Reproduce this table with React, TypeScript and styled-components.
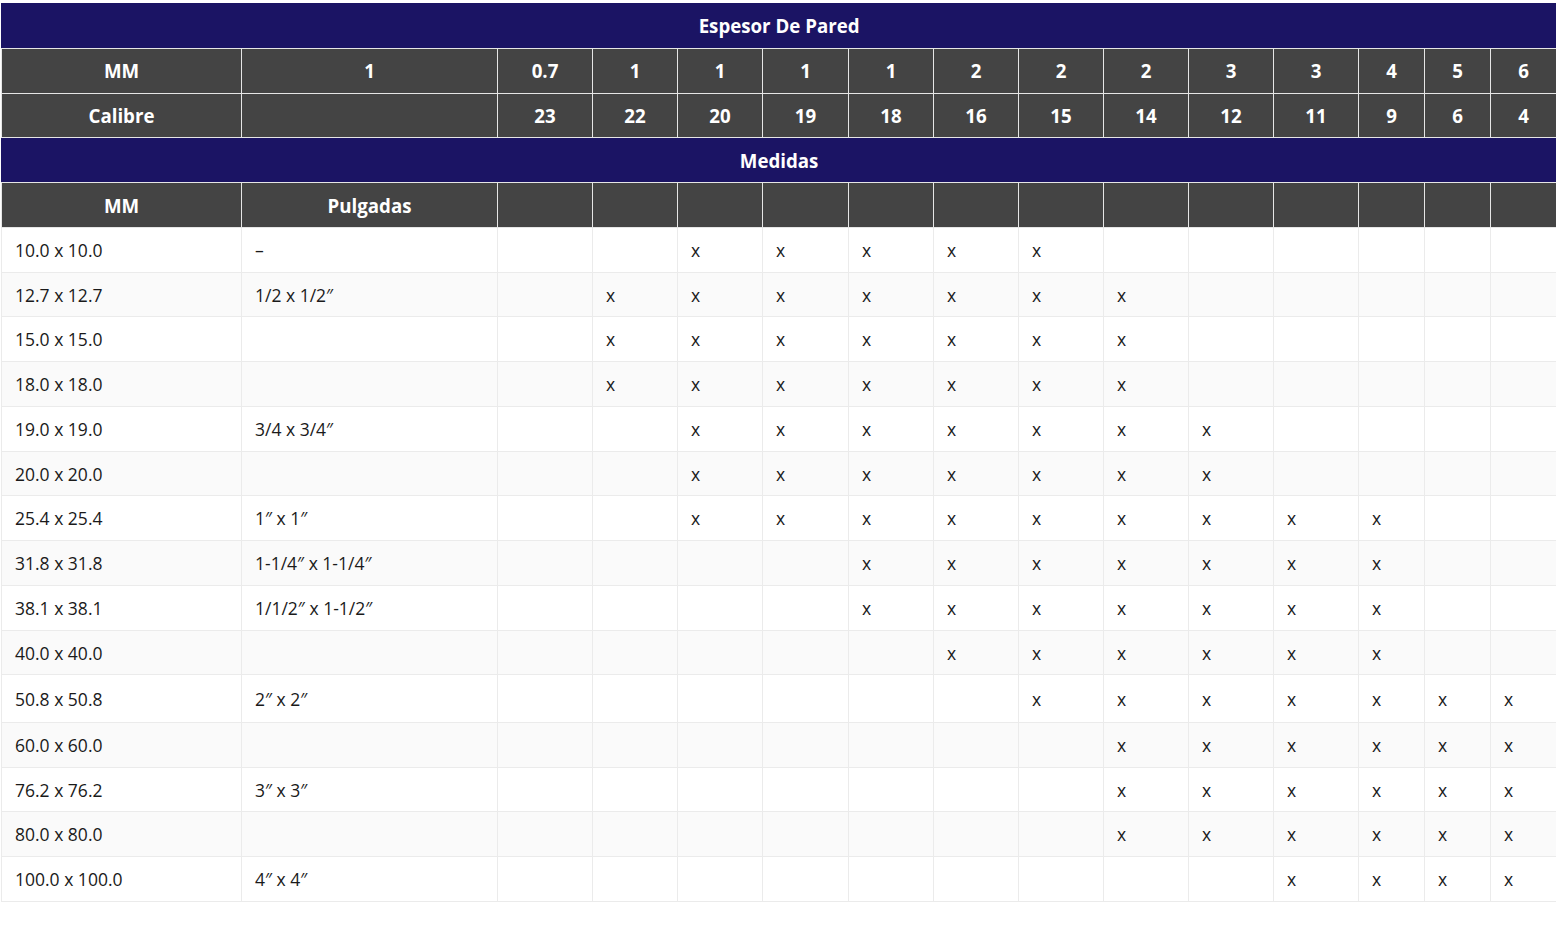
import { type FC } from 'react';
import styled, { createGlobalStyle } from 'styled-components';

const GlobalStyle = createGlobalStyle`
  html, body {
    margin: 0;
    padding: 0;
    background: #ffffff;
  }
  body {
    font-family: 'Open Sans', 'Liberation Sans', sans-serif;
  }
`;

const Page = styled.div`
  padding: 3px 0 0 1px;
`;

const Table = styled.table`
  width: 1555px;
  table-layout: fixed;
  border-collapse: collapse;
  border: 1px solid #e9e9e9;
  font-family: 'Open Sans', 'Liberation Sans', sans-serif;
`;

const BandRow = styled.tr`
  height: 44.8px;
  background: #1b1464;
`;

const BandCell = styled.th`
  color: #ffffff;
  font-size: 18.7px;
  font-weight: 700;
  text-align: center;
  vertical-align: middle;
  padding: 0 13px;
  border: 1px solid #1b1464;
  border-bottom: 1px solid #e6e6e6;
`;

const HeadRow = styled.tr`
  height: 44.8px;
  background: #444444;
`;

const HeadCell = styled.th`
  color: #ffffff;
  font-size: 18.7px;
  font-weight: 700;
  text-align: center;
  vertical-align: middle;
  padding: 0 6px;
  border: 1px solid #e6e6e6;
`;

const BodyRow = styled.tr<{ $tall?: boolean }>`
  height: ${({ $tall }) => ($tall ? '47.5px' : '44.75px')};
  background: #ffffff;

  &:nth-child(even) {
    background: #fafafa;
  }
`;

const BodyCell = styled.td`
  color: #1a1a1a;
  font-size: 17.5px;
  font-weight: 400;
  text-align: left;
  vertical-align: middle;
  padding: 0 13px;
  border: 1px solid #ebebeb;
  white-space: nowrap;
`;

const widths = [240, 256, 95, 85, 85, 86, 85, 85, 85, 85, 85, 85, 66, 66, 66];

const espesor = ['0.7', '1', '1', '1', '1', '2', '2', '2', '3', '3', '4', '5', '6'];
const calibre = ['23', '22', '20', '19', '18', '16', '15', '14', '12', '11', '9', '6', '4'];

interface Medida {
  mm: string;
  inches: string;
  from: number;
  to: number;
}

// from/to: first and last gauge column (index into calibre) marked with an x
const medidas: Medida[] = [
  { mm: '10.0 x 10.0', inches: '–', from: 2, to: 6 },
  { mm: '12.7 x 12.7', inches: '1/2 x 1/2″', from: 1, to: 7 },
  { mm: '15.0 x 15.0', inches: '', from: 1, to: 7 },
  { mm: '18.0 x 18.0', inches: '', from: 1, to: 7 },
  { mm: '19.0 x 19.0', inches: '3/4 x 3/4″', from: 2, to: 8 },
  { mm: '20.0 x 20.0', inches: '', from: 2, to: 8 },
  { mm: '25.4 x 25.4', inches: '1″ x 1″', from: 2, to: 10 },
  { mm: '31.8 x 31.8', inches: '1-1/4″ x 1-1/4″', from: 4, to: 10 },
  { mm: '38.1 x 38.1', inches: '1/1/2″ x 1-1/2″', from: 4, to: 10 },
  { mm: '40.0 x 40.0', inches: '', from: 5, to: 10 },
  { mm: '50.8 x 50.8', inches: '2″ x 2″', from: 6, to: 12 },
  { mm: '60.0 x 60.0', inches: '', from: 7, to: 12 },
  { mm: '76.2 x 76.2', inches: '3″ x 3″', from: 7, to: 12 },
  { mm: '80.0 x 80.0', inches: '', from: 7, to: 12 },
  { mm: '100.0 x 100.0', inches: '4″ x 4″', from: 9, to: 12 },
];

const App: FC = () => (
  <Page>
    <GlobalStyle />
    <Table>
      <colgroup>
        {widths.map((w, i) => (
          <col key={i} style={{ width: w }} />
        ))}
      </colgroup>
      <thead>
        <BandRow>
          <BandCell colSpan={15}>Espesor De Pared</BandCell>
        </BandRow>
        <HeadRow>
          <HeadCell>MM</HeadCell>
          <HeadCell>1</HeadCell>
          {espesor.map((v, i) => (
            <HeadCell key={i}>{v}</HeadCell>
          ))}
        </HeadRow>
        <HeadRow>
          <HeadCell>Calibre</HeadCell>
          <HeadCell />
          {calibre.map((v, i) => (
            <HeadCell key={i}>{v}</HeadCell>
          ))}
        </HeadRow>
        <BandRow>
          <BandCell colSpan={15}>Medidas</BandCell>
        </BandRow>
        <HeadRow>
          <HeadCell>MM</HeadCell>
          <HeadCell>Pulgadas</HeadCell>
          {calibre.map((_, i) => (
            <HeadCell key={i} />
          ))}
        </HeadRow>
      </thead>
      <tbody>
        {medidas.map((m) => (
          <BodyRow key={m.mm} $tall={m.mm === '50.8 x 50.8'}>
            <BodyCell>{m.mm}</BodyCell>
            <BodyCell>{m.inches}</BodyCell>
            {calibre.map((_, i) => (
              <BodyCell key={i}>{i >= m.from && i <= m.to ? 'x' : ''}</BodyCell>
            ))}
          </BodyRow>
        ))}
      </tbody>
    </Table>
  </Page>
);

export default App;
